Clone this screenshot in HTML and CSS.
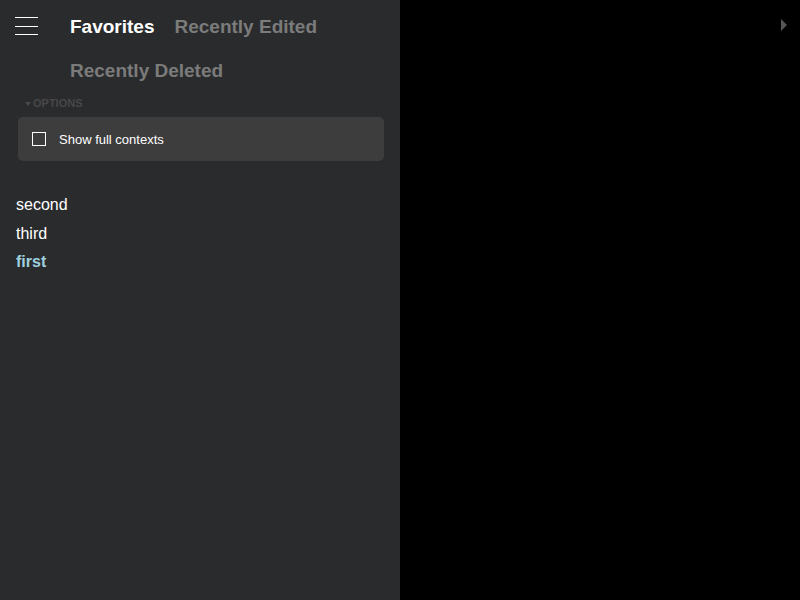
FILE: index.html
```html
<!DOCTYPE html>
<html>
<head>
<meta charset="utf-8">
<link rel="stylesheet" href="styles.css">
</head>
<body>
<div class="app">
  <aside class="sidebar">
    <header class="header">
      <div class="hamburger"><span></span><span></span><span></span></div>
      <nav class="tabs">
        <span class="tab active">Favorites</span>
        <span class="tab">Recently Edited</span>
        <span class="tab">Recently Deleted</span>
      </nav>
    </header>
    <div class="options-label"><span class="caret"></span>OPTIONS</div>
    <div class="options-box">
      <span class="checkbox"></span>
      <span class="option-text">Show full contexts</span>
    </div>
    <ul class="list">
      <li>second</li>
      <li>third</li>
      <li class="current">first</li>
    </ul>
  </aside>
  <main class="main">
    <span class="toggle"></span>
  </main>
</div>
</body>
</html>
```
FILE: styles.css
```css
html, body {
  margin: 0;
  padding: 0;
  background: #000;
  font-family: "Liberation Sans", Arial, sans-serif;
}
.app {
  display: flex;
  width: 800px;
  height: 600px;
}
.sidebar {
  width: 400px;
  height: 600px;
  background: #2a2b2d;
  box-sizing: border-box;
}
.header {
  display: flex;
  align-items: flex-start;
  padding: 16px 16px 0 15px;
}
.hamburger {
  width: 23px;
  height: 18px;
  margin-top: 1px;
  display: flex;
  flex-direction: column;
  justify-content: space-between;
  flex-shrink: 0;
}
.hamburger span {
  display: block;
  height: 1px;
  background: #fff;
}
.tabs {
  display: flex;
  flex-wrap: wrap;
  column-gap: 20px;
  row-gap: 22px;
  margin-left: 32px;
}
.tab {
  font-size: 19px;
  line-height: 22px;
  font-weight: bold;
  color: #7b7b7b;
}
.tab.active {
  color: #fff;
}
.options-label {
  display: flex;
  align-items: center;
  margin: 15px 0 0 25px;
  font-size: 11px;
  line-height: 13px;
  font-weight: bold;
  color: #474747;
}
.caret {
  width: 0;
  height: 0;
  border-left: 3px solid transparent;
  border-right: 3px solid transparent;
  border-top: 4px solid #4a4a4a;
  margin-right: 2px;
}
.options-box {
  display: flex;
  align-items: center;
  margin: 7px 16px 0 18px;
  height: 44px;
  padding-left: 14px;
  background: #3d3d3d;
  border-radius: 5px;
}
.checkbox {
  width: 12px;
  height: 12px;
  border: 1px solid #fff;
  margin-right: 13px;
}
.option-text {
  font-size: 13px;
  color: #fff;
}
.list {
  list-style: none;
  margin: 30px 0 0 16px;
  padding: 0;
}
.list li {
  font-size: 16px;
  line-height: 28.5px;
  color: #fff;
}
.list li.current {
  color: #9fd0df;
  font-weight: bold;
}
.main {
  flex: 1;
  display: flex;
  justify-content: flex-end;
  align-items: flex-start;
  background: #000;
}
.toggle {
  width: 0;
  height: 0;
  margin: 19px 13px 0 0;
  border-top: 6.5px solid transparent;
  border-bottom: 6.5px solid transparent;
  border-left: 6px solid #555;
}
```
